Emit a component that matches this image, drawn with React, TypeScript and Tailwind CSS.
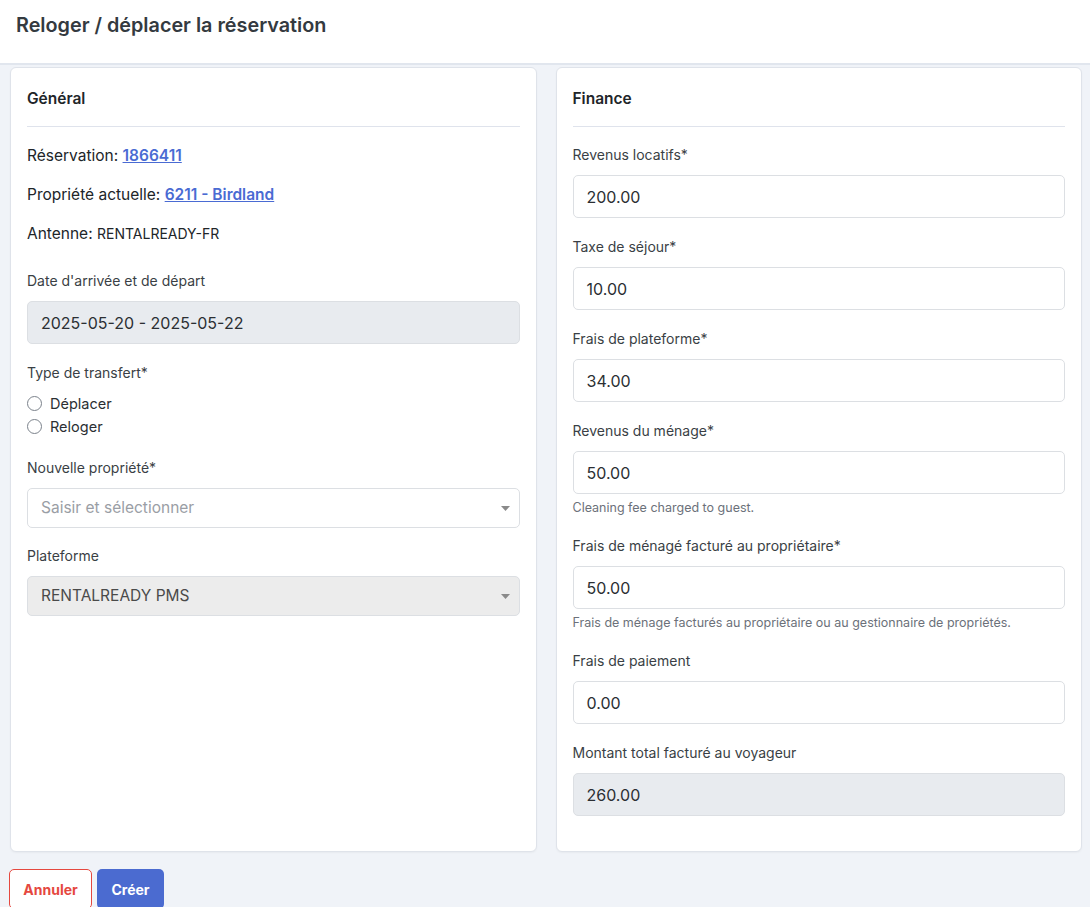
import type { ReactNode } from "react"

const font = { fontFamily: "Inter, 'Noto Sans', sans-serif" }

function Card({ title, children }: { title: string; children: ReactNode }) {
  return (
    <div className="flex-1 rounded-md border border-[#dfe3ea] bg-white px-[16px] pt-[18px] pb-[16px] shadow-[0_1px_2px_rgba(0,0,0,0.04)]">
      <h2 className="border-b border-[#dfe3ec] pb-[15px] text-[15.5px] leading-[25px] font-semibold text-[#212529]">{title}</h2>
      <div className="pt-[18px]">{children}</div>
    </div>
  )
}

function Field({ label, value, help, readOnly }: { label: string; value: string; help?: string; readOnly?: boolean }) {
  return (
    <div className={help ? "mb-[20px]" : "mb-[19px]"}>
      <label className="mb-[10px] block text-[14px] leading-[20px] text-[#3a3f45]">{label}</label>
      <div
        className={`flex h-[43px] items-center rounded-[5px] border border-[#dcdfe3] px-[13px] text-[16px] text-[#2b2f33] ${
          readOnly ? "bg-[#e8ebef]" : "bg-white"
        }`}
      >
        {value}
      </div>
      {help && <p className="mt-[5px] text-[12.5px] leading-[17px] text-[#6c717a]">{help}</p>}
    </div>
  )
}

function SelectBox({ value, placeholder, disabled }: { value: string; placeholder?: boolean; disabled?: boolean }) {
  return (
    <div
      className={`flex h-[40px] items-center justify-between rounded-[5px] border border-[#dcdfe3] pl-[13px] pr-[9px] text-[15.5px] ${
        disabled ? "bg-[#ececec] text-[#4a4a4a]" : "bg-white"
      } ${placeholder ? "text-[#9a9ea5]" : ""}`}
    >
      <span>{value}</span>
      <svg width="9" height="5" viewBox="0 0 9 5">
        <path d="M0 0h9L4.5 5z" fill="#8a8a8a" />
      </svg>
    </div>
  )
}

function Radio({ label }: { label: string }) {
  return (
    <div className="flex h-[23px] items-center gap-[8px]">
      <span className="h-[15px] w-[15px] rounded-full border border-[#7b828b] bg-white" />
      <span className="text-[14.5px] text-[#2b2f33]">{label}</span>
    </div>
  )
}

export default function App() {
  return (
    <div className="min-h-[907px] bg-[#f0f3f8]" style={font}>
      <header className="h-[65px] border-b-2 border-[#e1e6ee] bg-white px-[16px] pt-[11px]">
        <h1 className="text-[19.8px] leading-[28px] font-semibold text-[#343a40]">Reloger / déplacer la réservation</h1>
      </header>

      <div className="flex gap-[19px] pl-[10px] pr-[8px] pt-[2px]">
        <Card title="Général">
          <div className="text-[15.5px] text-[#212529]">
            <p className="mb-[17px] leading-[22px]">
              Réservation:{" "}
              <a href="#" className="font-semibold text-[#4a6bd3] underline">
                1866411
              </a>
            </p>
            <p className="mb-[17px] leading-[22px]">
              Propriété actuelle:{" "}
              <a href="#" className="font-semibold text-[#4a6bd3] underline">
                6211 - Birdland
              </a>
            </p>
            <p className="mb-[26px] leading-[22px]">
              Antenne: <span className="text-[14px]">RENTALREADY-FR</span>
            </p>
          </div>

          <Field label="Date d'arrivée et de départ" value="2025-05-20 - 2025-05-22" readOnly />

          <div className="mb-[20px]">
            <label className="mb-[9px] block text-[14px] leading-[20px] text-[#3a3f45]">Type de transfert*</label>
            <Radio label="Déplacer" />
            <Radio label="Reloger" />
          </div>

          <div className="mb-[18px]">
            <label className="mb-[10px] block text-[14px] leading-[20px] text-[#3a3f45]">Nouvelle propriété*</label>
            <SelectBox value="Saisir et sélectionner" placeholder />
          </div>

          <div>
            <label className="mb-[10px] block text-[14px] leading-[20px] text-[#3a3f45]">Plateforme</label>
            <SelectBox value="RENTALREADY PMS" disabled />
          </div>
        </Card>

        <Card title="Finance">
          <Field label="Revenus locatifs*" value="200.00" />
          <Field label="Taxe de séjour*" value="10.00" />
          <Field label="Frais de plateforme*" value="34.00" />
          <Field label="Revenus du ménage*" value="50.00" help="Cleaning fee charged to guest." />
          <Field
            label="Frais de ménagé facturé au propriétaire*"
            value="50.00"
            help="Frais de ménage facturés au propriétaire ou au gestionnaire de propriétés."
          />
          <Field label="Frais de paiement" value="0.00" />
          <Field label="Montant total facturé au voyageur" value="260.00" readOnly />
        </Card>
      </div>

      <div className="flex gap-[5px] px-[9px] pt-[17px]">
        <button className="h-[40px] w-[83px] rounded-[5px] border border-[#e5483f] bg-white text-[14px] font-bold text-[#e5483f]">
          Annuler
        </button>
        <button className="h-[40px] w-[67px] rounded-[5px] bg-[#4b6bd0] text-[14px] font-bold text-white">Créer</button>
      </div>
    </div>
  )
}
